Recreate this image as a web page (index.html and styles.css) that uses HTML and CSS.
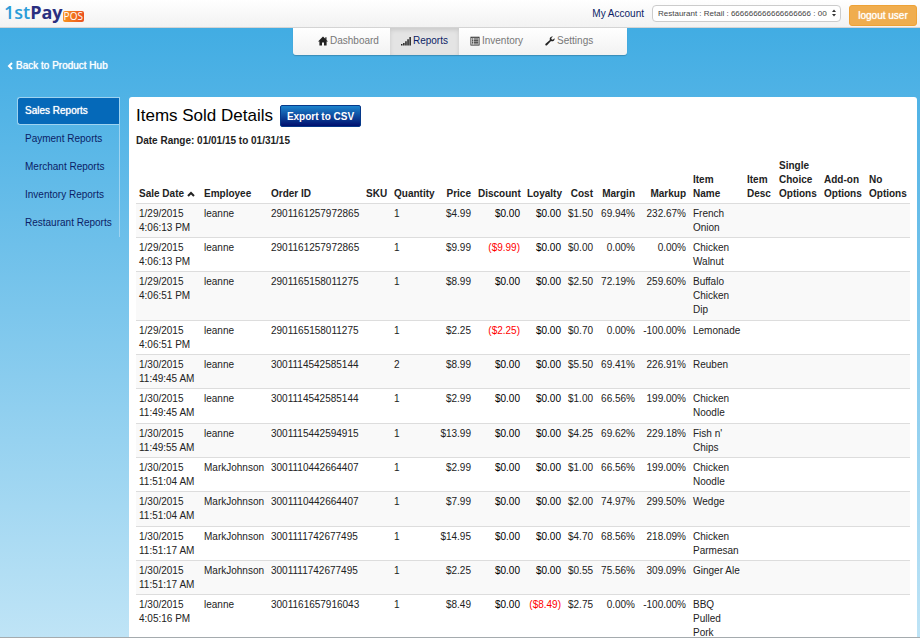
FILE: index.html
```html
<!DOCTYPE html>
<html lang="en">
<head>
    <meta charset="UTF-8">
    <meta name="viewport" content="width=device-width, initial-scale=1.0">
    <title>Items Sold Details</title>
    <link rel="stylesheet" href="styles.css">
</head>
<body>
<div class="app">
    <header class="topbar">
        <a href="#" class="logo"><span class="logo-first">1st</span><span class="logo-pay">Pay</span><span class="logo-pos">POS</span></a>
        <div class="account">
            <a href="#" class="account-link">My Account</a>
            <div class="select-wrap">
                <select aria-label="Merchant account">
                    <option>Restaurant : Retail : 666666666666666666 : 008</option>
                </select>
                <svg class="select-arrows" viewBox="0 0 6 8" aria-hidden="true"><path d="M3 0.5 5 3H1zM3 7.5 1 5h4z"/></svg>
            </div>
            <button class="logout">logout user</button>
        </div>
    </header>

    <nav class="main-nav">
        <a href="#"><svg viewBox="0 0 10 10"><path d="M5 .6 0 5.4h1.4V9.5H4V6.5h2v3h2.600V5.400H10L8.500 4V1.200H7.300V2.800z"/></svg>Dashboard</a>
        <a href="#" class="active"><svg viewBox="0 0 10 10"><path d="M0 8h1.500v1.500H0zM2.100 7h1.500v2.500H2.100zM4.200 5.200h1.500v4.300H4.200zM6.300 3.200h1.500v6.300H6.300zM8.400 1h1.500v8.500H8.400z"/></svg>Reports</a>
        <a href="#"><svg viewBox="0 0 10 10"><path fill-rule="evenodd" d="M.5.800h9v8.700h-9zM1.300 1.800v6.900h7.400V1.800z"/><path d="M2 2.500h1.400v1H2zM4 2.500h4.200v1H4zM2 4.200h1.400v1H2zM4 4.200h4.200v1H4zM2 5.800h1.400v1H2zM4 5.800h4.200v1H4zM2 7.400h1.400v.8H2zM4 7.400h4.200v.8H4z"/></svg>Inventory</a>
        <a href="#"><svg viewBox="0 0 10 10"><path d="M9.500 2.300 7.800 3.700 6.500 3.300 6.300 2 8 .6C6.500.1 4.700 1 4.700 2.900c0 .4.100.700.200 1L.6 7.800c-.9 1 .4 2.300 1.400 1.500L6 5.100c2 .7 4-.9 3.500-2.800z"/></svg>Settings</a>
    </nav>

    <a href="#" class="back"><svg viewBox="0 0 6 8"><path d="M5 1 2 4l3 3" fill="none" stroke="#fff" stroke-width="2"/></svg>Back to Product Hub</a>

    <div class="content">
        <aside class="sidebar">
            <a href="#" class="active">Sales Reports</a>
            <a href="#">Payment Reports</a>
            <a href="#">Merchant Reports</a>
            <a href="#">Inventory Reports</a>
            <a href="#">Restaurant Reports</a>
        </aside>

        <main class="panel">
            <div class="panel-head">
                <h1>Items Sold Details</h1>
                <button class="export">Export to CSV</button>
            </div>
            <p class="date-range">Date Range: 01/01/15 to 01/31/15</p>

            <table class="report">
                <colgroup>
                    <col class="c-date"><col class="c-employee"><col class="c-order"><col class="c-sku">
                    <col class="c-qty"><col class="c-price"><col class="c-discount"><col class="c-loyalty">
                    <col class="c-cost"><col class="c-margin"><col class="c-markup"><col class="c-name">
                    <col class="c-desc"><col class="c-option"><col class="c-option"><col>
                </colgroup>
                <thead>
                    <tr>
                        <th>Sale Date <svg class="sort" viewBox="0 0 8 6"><path d="M1 5l3-3 3 3" fill="none" stroke="#222" stroke-width="2"/></svg></th>
                        <th>Employee</th>
                        <th>Order ID</th>
                        <th>SKU</th>
                        <th>Quantity</th>
                        <th class="num">Price</th>
                        <th class="num">Discount</th>
                        <th class="num">Loyalty</th>
                        <th class="num">Cost</th>
                        <th class="num">Margin</th>
                        <th class="num">Markup</th>
                        <th>Item<br>Name</th>
                        <th>Item<br>Desc</th>
                        <th>Single<br>Choice<br>Options</th>
                        <th>Add-on<br>Options</th>
                        <th>No<br>Options</th>
                    </tr>
                </thead>
                <tbody>
                    <tr><td>1/29/2015<br>4:06:13 PM</td><td>leanne</td><td>2901161257972865</td><td></td><td>1</td><td class="num">$4.99</td><td class="num adj">$0.00</td><td class="num adj">$0.00</td><td class="num">$1.50</td><td class="num">69.94%</td><td class="num">232.67%</td><td>French<br>Onion</td><td></td><td></td><td></td><td></td></tr>
                    <tr><td>1/29/2015<br>4:06:13 PM</td><td>leanne</td><td>2901161257972865</td><td></td><td>1</td><td class="num">$9.99</td><td class="num neg">($9.99)</td><td class="num adj">$0.00</td><td class="num">$0.00</td><td class="num">0.00%</td><td class="num">0.00%</td><td>Chicken<br>Walnut</td><td></td><td></td><td></td><td></td></tr>
                    <tr><td>1/29/2015<br>4:06:51 PM</td><td>leanne</td><td>2901165158011275</td><td></td><td>1</td><td class="num">$8.99</td><td class="num adj">$0.00</td><td class="num adj">$0.00</td><td class="num">$2.50</td><td class="num">72.19%</td><td class="num">259.60%</td><td>Buffalo<br>Chicken<br>Dip</td><td></td><td></td><td></td><td></td></tr>
                    <tr><td>1/29/2015<br>4:06:51 PM</td><td>leanne</td><td>2901165158011275</td><td></td><td>1</td><td class="num">$2.25</td><td class="num neg">($2.25)</td><td class="num adj">$0.00</td><td class="num">$0.70</td><td class="num">0.00%</td><td class="num">-100.00%</td><td>Lemonade</td><td></td><td></td><td></td><td></td></tr>
                    <tr><td>1/30/2015<br>11:49:45 AM</td><td>leanne</td><td>3001114542585144</td><td></td><td>2</td><td class="num">$8.99</td><td class="num adj">$0.00</td><td class="num adj">$0.00</td><td class="num">$5.50</td><td class="num">69.41%</td><td class="num">226.91%</td><td>Reuben</td><td></td><td></td><td></td><td></td></tr>
                    <tr><td>1/30/2015<br>11:49:45 AM</td><td>leanne</td><td>3001114542585144</td><td></td><td>1</td><td class="num">$2.99</td><td class="num adj">$0.00</td><td class="num adj">$0.00</td><td class="num">$1.00</td><td class="num">66.56%</td><td class="num">199.00%</td><td>Chicken<br>Noodle</td><td></td><td></td><td></td><td></td></tr>
                    <tr><td>1/30/2015<br>11:49:55 AM</td><td>leanne</td><td>3001115442594915</td><td></td><td>1</td><td class="num">$13.99</td><td class="num adj">$0.00</td><td class="num adj">$0.00</td><td class="num">$4.25</td><td class="num">69.62%</td><td class="num">229.18%</td><td>Fish n'<br>Chips</td><td></td><td></td><td></td><td></td></tr>
                    <tr><td>1/30/2015<br>11:51:04 AM</td><td>MarkJohnson</td><td>3001110442664407</td><td></td><td>1</td><td class="num">$2.99</td><td class="num adj">$0.00</td><td class="num adj">$0.00</td><td class="num">$1.00</td><td class="num">66.56%</td><td class="num">199.00%</td><td>Chicken<br>Noodle</td><td></td><td></td><td></td><td></td></tr>
                    <tr><td>1/30/2015<br>11:51:04 AM</td><td>MarkJohnson</td><td>3001110442664407</td><td></td><td>1</td><td class="num">$7.99</td><td class="num adj">$0.00</td><td class="num adj">$0.00</td><td class="num">$2.00</td><td class="num">74.97%</td><td class="num">299.50%</td><td>Wedge</td><td></td><td></td><td></td><td></td></tr>
                    <tr><td>1/30/2015<br>11:51:17 AM</td><td>MarkJohnson</td><td>3001111742677495</td><td></td><td>1</td><td class="num">$14.95</td><td class="num adj">$0.00</td><td class="num adj">$0.00</td><td class="num">$4.70</td><td class="num">68.56%</td><td class="num">218.09%</td><td>Chicken<br>Parmesan</td><td></td><td></td><td></td><td></td></tr>
                    <tr><td>1/30/2015<br>11:51:17 AM</td><td>MarkJohnson</td><td>3001111742677495</td><td></td><td>1</td><td class="num">$2.25</td><td class="num adj">$0.00</td><td class="num adj">$0.00</td><td class="num">$0.55</td><td class="num">75.56%</td><td class="num">309.09%</td><td>Ginger Ale</td><td></td><td></td><td></td><td></td></tr>
                    <tr><td>1/30/2015<br>4:05:16 PM</td><td>leanne</td><td>3001161657916043</td><td></td><td>1</td><td class="num">$8.49</td><td class="num adj">$0.00</td><td class="num neg">($8.49)</td><td class="num">$2.75</td><td class="num">0.00%</td><td class="num">-100.00%</td><td>BBQ<br>Pulled<br>Pork</td><td></td><td></td><td></td><td></td></tr>
                </tbody>
            </table>
        </main>
    </div>
</div>
</body>
</html>
```
FILE: styles.css
```css
* {
    margin: 0;
    padding: 0;
    box-sizing: border-box;
}

body {
    font-family: "Liberation Sans", Arial, sans-serif;
    font-size: 10px;
    line-height: 14px;
    color: #222;
}

a {
    color: #0b1d66;
    text-decoration: none;
}

button {
    font-family: inherit;
    font-size: 10px;
    color: #fff;
    cursor: pointer;
}

.app {
    height: 100vh;
    overflow-y: auto;
    scrollbar-width: none;
    background: linear-gradient(#3caae2, #53b4e6 18%, #bfe4f6);
    border-bottom: 1px solid #a5abae;
}

/* top bar */
.topbar {
    display: flex;
    justify-content: space-between;
    height: 28px;
    padding: 0 3px 0 4px;
    background: linear-gradient(#fff, #f2f2f2);
    border-bottom: 1px solid #d4d4d4;
}

.logo {
    display: flex;
    align-items: flex-start;
    font-family: "Open Sans", sans-serif;
    font-size: 18px;
    line-height: 25px;
}

.logo-first {
    font-weight: 600;
    color: #2b9cd8;
}

.logo-pay {
    font-weight: bold;
    color: #2a2f80;
}

.logo-pos {
    margin-top: 11px;
    padding: 0 1px;
    border-radius: 2px;
    background: linear-gradient(90deg, #f7941d, #ea4f1f);
    color: #fff;
    font-size: 10px;
    line-height: 11px;
}

.account {
    display: flex;
    align-items: flex-start;
    gap: 8px;
    padding-top: 5px;
}

.account-link {
    line-height: 17px;
}

.select-wrap {
    position: relative;
}

.select-wrap select {
    display: block;
    width: 189px;
    height: 17px;
    padding: 0 13px 0 5px;
    appearance: none;
    border: 1px solid #ccc;
    border-radius: 4px;
    background: #fff;
    color: #444;
    font-family: inherit;
    font-size: 8px;
}

.select-arrows {
    position: absolute;
    right: 4px;
    top: 4px;
    width: 6px;
    height: 8px;
    fill: #333;
}

.logout {
    width: 68px;
    height: 21px;
    border: 1px solid #eea236;
    border-radius: 3px;
    background: #f0ad4e;
}

.logout,
.back,
.sidebar .active {
    text-shadow: 0 0 1px #fff;
}

/* main navigation */
.main-nav {
    display: flex;
    width: 334px;
    height: 27px;
    margin: 0 auto;
    padding-left: 14px;
    border-radius: 0 0 3px 3px;
    background: linear-gradient(#fff, #f2f2f2);
    box-shadow: 0 1px 1px rgba(0, 0, 0, 0.2);
}

.main-nav a {
    display: flex;
    align-items: center;
    gap: 2px;
    padding: 0 11px 2px;
    color: #777;
}

.main-nav a.active {
    background: #e4e4e4;
    box-shadow: inset 0 2px 4px rgba(0, 0, 0, 0.12);
    color: #0b1d66;
}

.main-nav svg {
    width: 10px;
    height: 10px;
    fill: #222;
}

.back {
    display: flex;
    align-items: center;
    gap: 3px;
    padding: 4px 7px;
    color: #fff;
}

.back svg {
    width: 6px;
    height: 8px;
}

/* sidebar and panel */
.content {
    display: flex;
    align-items: flex-start;
    gap: 9px;
    padding: 20px 3px 0 17px;
}

.sidebar {
    flex: 0 0 103px;
    display: flex;
    flex-direction: column;
    gap: 1px;
    border-right: 1px solid #9fd3f0;
}

.sidebar a {
    padding: 6px 0 7px 8px;
    white-space: nowrap;
}

.sidebar a.active {
    border: 1px solid #9fd3f0;
    border-right: none;
    border-radius: 3px 0 0 3px;
    background: #0569b9;
    color: #fff;
    padding: 6px 0 6px 7px;
}

.panel {
    flex: 1;
    padding: 8px 7px 12px;
    border-radius: 3px 3px 0 0;
    background: #fff;
}

.panel-head {
    display: flex;
    align-items: center;
    gap: 7px;
}

h1 {
    font-size: 17px;
    font-weight: normal;
    line-height: 20px;
    color: #000;
}

.export {
    width: 81px;
    height: 22px;
    border: 1px solid #06398a;
    border-radius: 2px;
    background: linear-gradient(#1c84cd, #00106f);
    font-weight: bold;
}

.date-range {
    margin: 7px 0 8px;
    font-weight: bold;
}

/* report table */
.report {
    width: 100%;
    table-layout: fixed;
    border-collapse: separate;
    border-spacing: 0;
}

.report th,
.report td {
    padding: 3px 4px 2px 3px;
    text-align: left;
    vertical-align: top;
    white-space: nowrap;
}

.report th {
    vertical-align: bottom;
}

.report td {
    border-top: 1px solid #ddd;
}

.report tbody tr:nth-child(odd) {
    background: #f9f9f9;
}

.report tbody tr:nth-child(3n) td {
    padding-bottom: 3px;
}

.report .num {
    text-align: right;
}

.report .adj {
    color: #000;
}

.report .neg {
    color: #f00;
}

.sort {
    width: 8px;
    height: 6px;
}

.c-date { width: 65px; }
.c-employee { width: 67px; }
.c-order { width: 95px; }
.c-sku { width: 28px; }
.c-qty { width: 46px; }
.c-price { width: 38px; }
.c-discount { width: 49px; }
.c-loyalty { width: 41px; }
.c-cost { width: 32px; }
.c-margin { width: 42px; }
.c-markup { width: 51px; }
.c-name { width: 54px; }
.c-desc { width: 32px; }
.c-option { width: 45px; }
```
